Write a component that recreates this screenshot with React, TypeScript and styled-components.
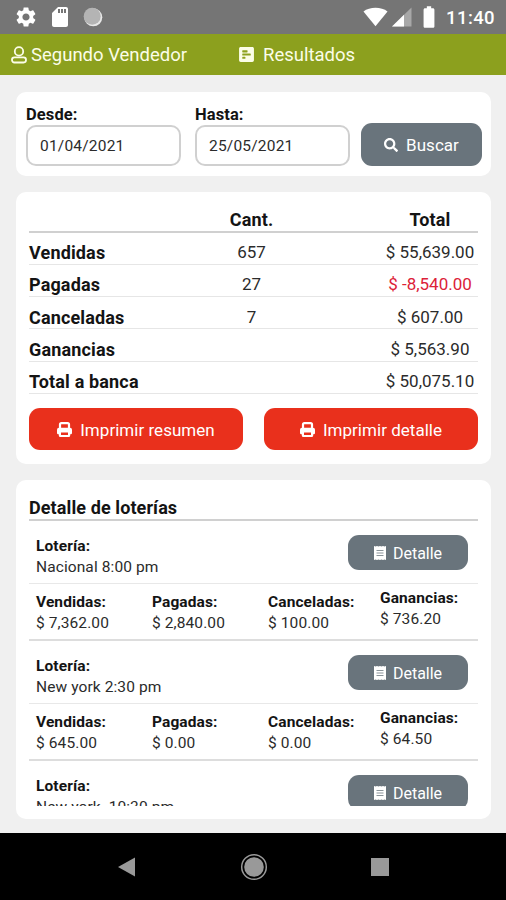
import React from 'react';
import styled, { createGlobalStyle } from 'styled-components';
import { FaPollH, FaSearch } from 'react-icons/fa';
import { MdSettings, MdSdCard, MdBatteryFull } from 'react-icons/md';

const GlobalStyle = createGlobalStyle`
  * {
    box-sizing: border-box;
  }

  body {
    margin: 0;
    background-color: #f0f0f0;
    font-family: Roboto, sans-serif;
    color: #141414;
  }

  button, input {
    font-family: inherit;
  }
`;

const Screen = styled.div`
  width: 506px;
  height: 900px;
  display: flex;
  flex-direction: column;
  overflow: hidden;
`;

const StatusBar = styled.div`
  height: 34px;
  padding: 0 11px 0 14px;
  display: flex;
  align-items: center;
  justify-content: space-between;
  background-color: #757575;
  color: #fff;
`;

const StatusGroup = styled.div<{ $gap: number }>`
  display: flex;
  align-items: center;
  gap: ${(props) => props.$gap}px;

  svg {
    display: block;
  }
`;

const Clock = styled.span`
  padding-top: 3px;
  font-size: 18.5px;
  font-weight: 500;
  letter-spacing: 0.4px;
  line-height: 33px;
`;

const AppBar = styled.header`
  height: 41px;
  display: flex;
  align-items: center;
  padding-left: 11px;
  background-color: #8ca01e;
  color: #fbfde8;
`;

const Tab = styled.div<{ $width?: number; $gap: number }>`
  width: ${(props) => (props.$width ? `${props.$width}px` : 'auto')};
  display: flex;
  align-items: center;
  gap: ${(props) => props.$gap}px;
  font-size: 18.5px;
  white-space: nowrap;
`;

const Content = styled.main`
  flex: 1;
  padding: 17px 15px 0 16px;
  display: flex;
  flex-direction: column;
  gap: 16px;
`;

const Card = styled.section<{ $height: number }>`
  height: ${(props) => props.$height}px;
  flex-shrink: 0;
  background-color: #fff;
  border-radius: 10px;
`;

const SearchCard = styled(Card)`
  display: flex;
  align-items: flex-end;
  padding: 0 9px 10px 10px;
`;

const Field = styled.label`
  width: 155px;
  margin-right: 14px;
  font-size: 16.5px;
  font-weight: 700;
  line-height: 20px;
  letter-spacing: 0.1px;

  &:nth-of-type(2) {
    margin-right: 11px;
  }
`;

const DateInput = styled.input`
  display: block;
  width: 155px;
  height: 41px;
  padding: 0 12px;
  border: 2px solid #d0d0d0;
  border-radius: 10px;
  background-color: #fff;
  color: #2b2b2b;
  font-size: 15.5px;
  letter-spacing: 0.2px;
`;

const Button = styled.button<{ $width: number; $height: number; $color: string }>`
  width: ${(props) => props.$width}px;
  height: ${(props) => props.$height}px;
  padding: 1px 0 0;
  display: flex;
  align-items: center;
  justify-content: center;
  flex-shrink: 0;
  gap: 8px;
  border: none;
  border-radius: 11px;
  background-color: ${(props) => props.$color};
  color: #fff;
  font-size: 17px;
  letter-spacing: 0.03px;
`;

const SmallButton = styled(Button)`
  gap: 7px;
  font-size: 16px;
  letter-spacing: 0;
`;

const SummaryCard = styled(Card)`
  padding: 0 13px;
`;

const SummaryRow = styled.div<{ $head?: boolean }>`
  height: ${(props) => (props.$head ? '40.5px' : '32.3px')};
  padding-top: ${(props) => (props.$head ? '17px' : '9.6px')};
  display: grid;
  grid-template-columns: 172px 101px 80px 96px;
  border-bottom: ${(props) => (props.$head ? '2px solid #d0d0d0' : '1px solid #e6e6e6')};
  line-height: 22px;
`;

const RowName = styled.span`
  font-size: 18px;
  font-weight: 700;
  letter-spacing: 0.15px;
`;

const HeadCell = styled(RowName)`
  text-align: center;
`;

const Value = styled.span<{ $negative?: boolean }>`
  margin-top: -1px;
  text-align: center;
  white-space: nowrap;
  font-size: 17px;
  color: ${(props) => (props.$negative ? '#dc2238' : '#2b2b2b')};
`;

const Actions = styled.div`
  display: flex;
  justify-content: space-between;
  margin-top: 14.5px;
`;

const DetailCard = styled(Card)`
  padding: 0 13px;
`;

const DetailTitle = styled.h2`
  height: 41px;
  margin: 0;
  padding-top: 17px;
  border-bottom: 2px solid #d0d0d0;
  font-size: 18px;
  line-height: 22px;
  letter-spacing: 0.1px;
`;

const LotteryList = styled.div`
  height: 284.5px;
  overflow: hidden;
`;

const Lottery = styled.article`
  height: 120px;
  border-bottom: 2px solid #ddd;
`;

const LotteryTop = styled.div`
  height: 63px;
  padding: 14px 10px 0 7px;
  display: flex;
  justify-content: space-between;
  border-bottom: 1px solid #e8e8e8;
`;

const Amounts = styled.div`
  display: grid;
  grid-template-columns: 116px 116px 112px 90px;
  padding: 8px 0 0 7px;
`;

const Pair = styled.div<{ $shift?: number }>`
  margin-top: ${(props) => props.$shift ?? 0}px;
  font-size: 15.5px;
  line-height: 20.5px;
  letter-spacing: 0.1px;
  white-space: pre;
  color: #2b2b2b;

  strong {
    display: block;
    color: #141414;
  }
`;

const NavBar = styled.nav`
  height: 67px;
  display: flex;
  justify-content: center;
  align-items: center;
  gap: 103px;
  background-color: #000;
`;

const UserIcon = () => (
  <svg width="16" height="18" viewBox="0 0 16 18" fill="none" stroke="currentColor" strokeWidth="1.8">
    <circle cx="8" cy="5.4" r="4.2" />
    <rect x="1" y="11.3" width="14" height="5.2" rx="2.4" />
  </svg>
);

const PrintIcon = () => (
  <svg width="15" height="15" viewBox="0 0 15 15">
    <path
      d="M3 6 V2.5 Q3 1.1 4.4 1.1 H10.6 Q12 1.1 12 2.5 V6"
      fill="none"
      stroke="currentColor"
      strokeWidth="2.2"
    />
    <path
      fill="currentColor"
      fillRule="evenodd"
      d="M2 5.8 H13 Q15 5.8 15 7.8 V11 Q15 12.2 13.8 12.2 H13.2 V13.4 Q13.2 15 11.6 15 H3.4 Q1.8 15 1.8 13.4 V12.2 H1.2 Q0 12.2 0 11 V7.8 Q0 5.8 2 5.8 Z M4 10.4 V12.9 H11 V10.4 Z"
    />
  </svg>
);

const ReceiptIcon = () => (
  <svg width="12" height="14" viewBox="0 0 12 14">
    <path
      d="M0 0 L1.5 0.6 L3 0 L4.5 0.6 L6 0 L7.5 0.6 L9 0 L10.5 0.6 L12 0 V14 L10.5 13.4 L9 14 L7.5 13.4 L6 14 L4.5 13.4 L3 14 L1.5 13.4 L0 14 Z"
      fill="#fff"
    />
    <path d="M2.5 4.5 H9.5 M2.5 7 H9.5 M2.5 9.5 H9.5" stroke="#8b949a" strokeWidth="1" />
  </svg>
);

interface ISummary {
  name: string;
  count?: string;
  total: string;
  negative?: boolean;
}

interface ILottery {
  name: string;
  amounts?: { label: string; value: string }[];
}

const summary: ISummary[] = [
  { name: 'Vendidas', count: '657', total: '$ 55,639.00' },
  { name: 'Pagadas', count: '27', total: '$ -8,540.00', negative: true },
  { name: 'Canceladas', count: '7', total: '$ 607.00' },
  { name: 'Ganancias', total: '$ 5,563.90' },
  { name: 'Total a banca', total: '$ 50,075.10' },
];

const lotteries: ILottery[] = [
  {
    name: 'Nacional 8:00 pm',
    amounts: [
      { label: 'Vendidas:', value: '$ 7,362.00' },
      { label: 'Pagadas:', value: '$ 2,840.00' },
      { label: 'Canceladas:', value: '$ 100.00' },
      { label: 'Ganancias:', value: '$ 736.20' },
    ],
  },
  {
    name: 'New york 2:30 pm',
    amounts: [
      { label: 'Vendidas:', value: '$ 645.00' },
      { label: 'Pagadas:', value: '$ 0.00' },
      { label: 'Canceladas:', value: '$ 0.00' },
      { label: 'Ganancias:', value: '$ 64.50' },
    ],
  },
  { name: 'New york  10:30 pm' },
];

const GREY = '#69747c';
const RED = '#e9301c';

const App = () => {
  return (
    <Screen>
      <GlobalStyle />
      <StatusBar>
        <StatusGroup $gap={10}>
          <MdSettings size={24} />
          <MdSdCard size={24} />
          <svg width="21" height="20" viewBox="0 0 21 20">
            <circle cx="11.3" cy="10.3" r="9" fill="#e8e8e8" />
            <circle cx="10.2" cy="9.2" r="8.5" fill="#b4b4b4" />
          </svg>
        </StatusGroup>
        <StatusGroup $gap={4}>
          <svg width="25" height="20" viewBox="0 0 26 20">
            <path d="M0.5 4.2 C7 -1 19 -1 25.5 4.2 L13 19.5 Z" fill="#fff" />
          </svg>
          <svg width="20" height="20" viewBox="0 0 20 20">
            <path d="M0 19.5 L19.5 0.5 V19.5 Z" fill="#a8a8a8" />
            <path d="M0 19.5 L12 7.8 V19.5 Z" fill="#fff" />
          </svg>
          <MdBatteryFull size={26} />
          <Clock>11:40</Clock>
        </StatusGroup>
      </StatusBar>
      <AppBar>
        <Tab $width={227} $gap={4}>
          <UserIcon />
          Segundo Vendedor
        </Tab>
        <Tab $gap={8}>
          <FaPollH size={17} />
          Resultados
        </Tab>
      </AppBar>
      <Content>
        <SearchCard $height={84}>
          <Field>
            Desde:
            <DateInput defaultValue="01/04/2021" />
          </Field>
          <Field>
            Hasta:
            <DateInput defaultValue="25/05/2021" />
          </Field>
          <Button $width={121} $height={43} $color={GREY}>
            <FaSearch size={14} />
            Buscar
          </Button>
        </SearchCard>
        <SummaryCard $height={272}>
          <SummaryRow $head>
            <span />
            <HeadCell>Cant.</HeadCell>
            <span />
            <HeadCell>Total</HeadCell>
          </SummaryRow>
          {summary.map((row) => (
            <SummaryRow key={row.name}>
              <RowName>{row.name}</RowName>
              <Value>{row.count}</Value>
              <span />
              <Value $negative={row.negative}>{row.total}</Value>
            </SummaryRow>
          ))}
          <Actions>
            <Button $width={214} $height={42} $color={RED}>
              <PrintIcon />
              Imprimir resumen
            </Button>
            <Button $width={214} $height={42} $color={RED}>
              <PrintIcon />
              Imprimir detalle
            </Button>
          </Actions>
        </SummaryCard>
        <DetailCard $height={339}>
          <DetailTitle>Detalle de loterías</DetailTitle>
          <LotteryList>
            {lotteries.map((lottery) => (
              <Lottery key={lottery.name}>
                <LotteryTop>
                  <Pair $shift={1}>
                    <strong>Lotería:</strong>
                    {lottery.name}
                  </Pair>
                  <SmallButton $width={120} $height={35} $color={GREY}>
                    <ReceiptIcon />
                    Detalle
                  </SmallButton>
                </LotteryTop>
                {lottery.amounts && (
                  <Amounts>
                    {lottery.amounts.map((amount, index) => (
                      <Pair key={amount.label} $shift={index === 3 ? -4 : 0}>
                        <strong>{amount.label}</strong>
                        {amount.value}
                      </Pair>
                    ))}
                  </Amounts>
                )}
              </Lottery>
            ))}
          </LotteryList>
        </DetailCard>
      </Content>
      <NavBar>
        <svg width="20" height="20" viewBox="0 0 20 20">
          <path d="M1 10 L18 0.5 V19.5 Z" fill="#999" />
        </svg>
        <svg width="28" height="28" viewBox="0 0 28 28">
          <circle cx="14" cy="14" r="12.3" fill="none" stroke="#999" strokeWidth="1.5" />
          <circle cx="14" cy="14" r="9.8" fill="#999" />
        </svg>
        <svg width="18" height="18" viewBox="0 0 18 18">
          <rect width="18" height="18" fill="#999" />
        </svg>
      </NavBar>
    </Screen>
  );
};

export default App;
